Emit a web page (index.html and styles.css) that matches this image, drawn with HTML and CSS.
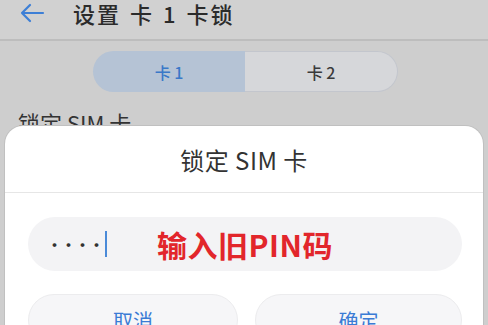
FILE: index.html
```html
<!DOCTYPE html>
<html lang="zh">
<head>
<meta charset="utf-8">
<link rel="stylesheet" href="styles.css">
</head>
<body>
<div class="screen">
  <header class="topbar">
    <svg class="back" width="26" height="20" viewBox="0 0 26 20">
      <path d="M24 10 H3 M11 2 L3 10 L11 18" fill="none" stroke="#3d7fd6" stroke-width="2.2" stroke-linecap="round" stroke-linejoin="round"/>
    </svg>
    <h1 class="title">设置 卡 1 卡锁</h1>
  </header>
  <div class="tabs">
    <div class="tab active">卡 1</div>
    <div class="tab">卡 2</div>
  </div>
  <div class="label">锁定 SIM 卡</div>

  <div class="dialog">
    <div class="dlg-title">锁定 SIM 卡</div>
    <div class="input">
      <span class="dots">••••</span><span class="cursor"></span>
      <span class="hint">输入旧PIN码</span>
    </div>
    <div class="buttons">
      <div class="btn btn-cancel">取消</div>
      <div class="btn btn-ok">确定</div>
    </div>
  </div>
</div>
</body>
</html>
```

FILE: styles.css
```css
* { box-sizing: border-box; margin: 0; padding: 0; }
html, body {
  width: 488px;
  height: 325px;
  overflow: hidden;
}
body {
  background: #cecece;
  font-family: "Noto Sans CJK SC", "Noto Sans", sans-serif;
  color: #2f2f2f;
}
.screen {
  position: relative;
  width: 488px;
  height: 325px;
  overflow: hidden;
}
.topbar {
  height: 41px;
  display: flex;
  align-items: center;
  padding-left: 19px;
  border-bottom: 2px solid #bdbdbd;
  background: #d1d1d1;
}
.back { display: block; margin-top: -14px; }
.title {
  margin-left: 28px;
  margin-top: -13px;
  font-size: 22px;
  font-weight: 500;
  letter-spacing: 2px;
  word-spacing: 2px;
  color: #2b2b2b;
}
.tabs {
  display: flex;
  width: 305px;
  height: 41px;
  margin: 10px 0 0 93px;
}
.tab {
  flex: 1;
  display: flex;
  align-items: center;
  justify-content: center;
  font-size: 16px;
  font-weight: 500;
}
.tab.active {
  background: #b5c3d5;
  color: #3a78c8;
  border-radius: 21px 0 0 21px;
}
.tab:not(.active) {
  background: #d6d7da;
  border: 1.5px solid #c3c6cd;
  border-left: none;
  border-radius: 0 21px 21px 0;
  color: #3a3a3a;
}
.label {
  margin: 14px 0 0 18px;
  font-size: 22px;
  color: #333;
}
.dialog {
  position: absolute;
  left: 5px;
  top: 126px;
  width: 478px;
  height: 220px;
  background: #fff;
  border-radius: 18px 18px 0 0;
  box-shadow: 0 0 0 1px #c0c0c0;
}
.dlg-title {
  height: 67px;
  display: flex;
  align-items: center;
  justify-content: center;
  font-size: 24px;
  letter-spacing: 0.5px;
  color: #333;
  border-bottom: 1.5px solid #e6e6e6;
}
.input {
  margin: 24px 0 0 23px;
  width: 434px;
  height: 54px;
  border-radius: 27px;
  background: #f3f3f5;
  display: flex;
  align-items: center;
  padding-left: 19px;
}
.dots {
  font-size: 15px;
  font-weight: 700;
  letter-spacing: -1px;
  color: #333;
}
.cursor {
  width: 2px;
  height: 26px;
  background: #4a8ad8;
  margin-left: 2px;
}
.hint {
  margin-left: 50px;
  font-size: 30px;
  font-weight: 700;
  color: #e2262b;
  letter-spacing: 0.5px;
}
.buttons {
  display: flex;
  gap: 17px;
  margin: 23px 0 0 23px;
  width: 434px;
}
.btn {
  height: 52px;
  border-radius: 26px;
  background: #f6f6f8;
  border: 1px solid #ececee;
  display: flex;
  justify-content: center;
  padding-top: 11px;
  font-size: 20px;
  color: #3a7bd5;
}
.btn-cancel { width: 210px; }
.btn-ok { width: 207px; }
```
